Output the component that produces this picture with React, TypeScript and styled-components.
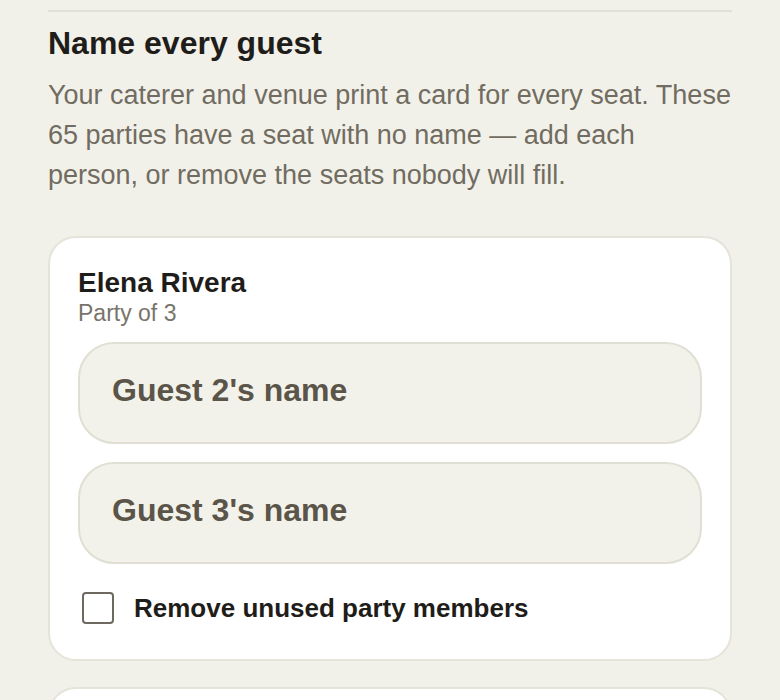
import React from "react";
import styled, { createGlobalStyle } from "styled-components";

const GlobalStyle = createGlobalStyle`
  html {
    scrollbar-width: none;
  }
  html::-webkit-scrollbar {
    display: none;
  }
  body {
    margin: 0;
    background: #f2f1e9;
    font-family: "Liberation Sans", Arial, sans-serif;
    color: #1f1d1a;
  }
`;

const Page = styled.main`
  padding: 10px 48px 40px;
`;

const Divider = styled.hr`
  border: 0;
  height: 2px;
  background: #e1e0d7;
  margin: 0 0 11px;
`;

const Heading = styled.h2`
  margin: 0;
  font-size: 32px;
  line-height: 40px;
  font-weight: 700;
  color: #1f1d1a;
`;

const Intro = styled.p`
  margin: 12px 0 41px;
  max-width: 683px;
  font-size: 27px;
  line-height: 40px;
  color: #716c61;
`;

const CardList = styled.div`
  display: flex;
  flex-direction: column;
  gap: 26px;
`;

const Card = styled.section`
  background: #ffffff;
  border: 2px solid #e5e4da;
  border-radius: 28px;
  padding: 28px 28px 35px;
`;

const PartyName = styled.div`
  font-size: 28px;
  line-height: 34px;
  font-weight: 700;
  color: #1f1d1a;
`;

const PartySize = styled.div`
  font-size: 23px;
  line-height: 26px;
  color: #78746b;
`;

const Fields = styled.div`
  display: flex;
  flex-direction: column;
  gap: 18px;
  margin-top: 16px;
`;

const NameInput = styled.input`
  box-sizing: border-box;
  width: 100%;
  height: 102px;
  padding: 0 32px 5px;
  border: 2px solid #e0dfd3;
  border-radius: 36px;
  background: #f2f2ea;
  font-family: inherit;
  font-size: 32px;
  font-weight: 700;
  color: #1f1d1a;
  outline: none;

  &::placeholder {
    color: #5b5549;
    opacity: 1;
  }
`;

const CheckRow = styled.label`
  display: flex;
  align-items: center;
  gap: 20px;
  margin-top: 28px;
  padding-left: 4px;
  height: 32px;
  cursor: pointer;
`;

const Box = styled.input`
  appearance: none;
  box-sizing: border-box;
  width: 32px;
  height: 32px;
  margin: 0;
  border: 2px solid #6d6960;
  border-radius: 4px;
  background: #ffffff;
  flex-shrink: 0;
`;

const CheckLabel = styled.span`
  font-size: 26px;
  font-weight: 700;
  color: #1f1d1a;
`;

type Party = {
  lead: string;
  size: number;
};

const parties: Party[] = [
  { lead: "Elena Rivera", size: 3 },
  { lead: "Marcus Chen", size: 2 },
];

const PartyCard: React.FC<{ party: Party }> = ({ party }) => {
  const unnamed = Array.from({ length: party.size - 1 }, (_, i) => i + 2);
  return (
    <Card>
      <PartyName>{party.lead}</PartyName>
      <PartySize>Party of {party.size}</PartySize>
      <Fields>
        {unnamed.map((n) => (
          <NameInput key={n} type="text" placeholder={`Guest ${n}'s name`} />
        ))}
      </Fields>
      <CheckRow>
        <Box type="checkbox" />
        <CheckLabel>Remove unused party members</CheckLabel>
      </CheckRow>
    </Card>
  );
};

const App: React.FC = () => (
  <>
    <GlobalStyle />
    <Page>
      <Divider />
      <Heading>Name every guest</Heading>
      <Intro>
        Your caterer and venue print a card for every seat. These 65 parties
        have a seat with no name — add each person, or remove the seats nobody
        will fill.
      </Intro>
      <CardList>
        {parties.map((p) => (
          <PartyCard key={p.lead} party={p} />
        ))}
      </CardList>
    </Page>
  </>
);

export default App;
